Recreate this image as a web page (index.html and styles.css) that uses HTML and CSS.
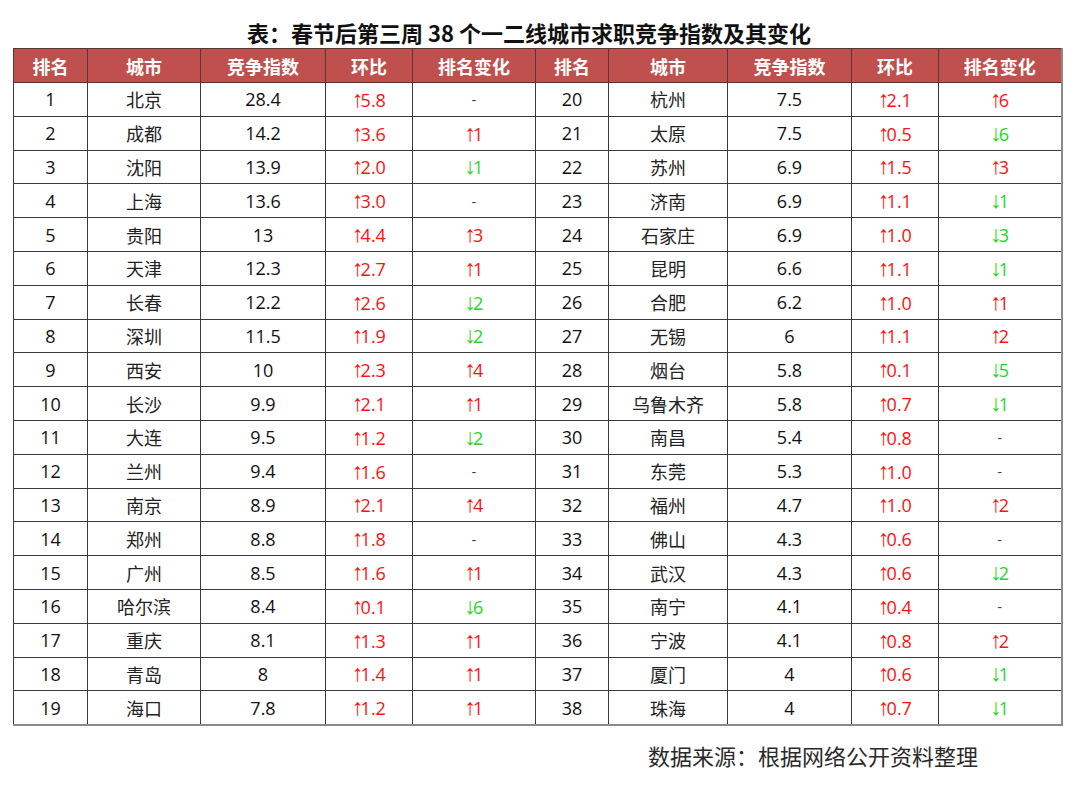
FILE: index.html
```html
<!DOCTYPE html>
<html lang="zh-CN">
<head>
<meta charset="utf-8">
<title>春节后第三周 38 个一二线城市求职竞争指数及其变化</title>
<link rel="stylesheet" href="styles.css">
</head>
<body>
<div class="page">
  <h1 class="title">表：春节后第三周 38 个一二线城市求职竞争指数及其变化</h1>
  <table class="grid">
    <colgroup>
      <col class="c1"><col class="c2"><col class="c3"><col class="c4"><col class="c5">
      <col class="c6"><col class="c7"><col class="c8"><col class="c9"><col class="c10">
    </colgroup>
    <thead>
      <tr><th>排名</th><th>城市</th><th>竞争指数</th><th>环比</th><th>排名变化</th><th>排名</th><th>城市</th><th>竞争指数</th><th>环比</th><th>排名变化</th></tr>
    </thead>
    <tbody>
      <tr><td>1</td><td class="cn">北京</td><td>28.4</td><td class="up"><span class="ar">↑</span>5.8</td><td class="na">-</td><td>20</td><td class="cn">杭州</td><td>7.5</td><td class="up"><span class="ar">↑</span>2.1</td><td class="up"><span class="ar">↑</span>6</td></tr>
      <tr><td>2</td><td class="cn">成都</td><td>14.2</td><td class="up"><span class="ar">↑</span>3.6</td><td class="up"><span class="ar">↑</span>1</td><td>21</td><td class="cn">太原</td><td>7.5</td><td class="up"><span class="ar">↑</span>0.5</td><td class="dn"><span class="ar">↓</span>6</td></tr>
      <tr><td>3</td><td class="cn">沈阳</td><td>13.9</td><td class="up"><span class="ar">↑</span>2.0</td><td class="dn"><span class="ar">↓</span>1</td><td>22</td><td class="cn">苏州</td><td>6.9</td><td class="up"><span class="ar">↑</span>1.5</td><td class="up"><span class="ar">↑</span>3</td></tr>
      <tr><td>4</td><td class="cn">上海</td><td>13.6</td><td class="up"><span class="ar">↑</span>3.0</td><td class="na">-</td><td>23</td><td class="cn">济南</td><td>6.9</td><td class="up"><span class="ar">↑</span>1.1</td><td class="dn"><span class="ar">↓</span>1</td></tr>
      <tr><td>5</td><td class="cn">贵阳</td><td>13</td><td class="up"><span class="ar">↑</span>4.4</td><td class="up"><span class="ar">↑</span>3</td><td>24</td><td class="cn">石家庄</td><td>6.9</td><td class="up"><span class="ar">↑</span>1.0</td><td class="dn"><span class="ar">↓</span>3</td></tr>
      <tr><td>6</td><td class="cn">天津</td><td>12.3</td><td class="up"><span class="ar">↑</span>2.7</td><td class="up"><span class="ar">↑</span>1</td><td>25</td><td class="cn">昆明</td><td>6.6</td><td class="up"><span class="ar">↑</span>1.1</td><td class="dn"><span class="ar">↓</span>1</td></tr>
      <tr><td>7</td><td class="cn">长春</td><td>12.2</td><td class="up"><span class="ar">↑</span>2.6</td><td class="dn"><span class="ar">↓</span>2</td><td>26</td><td class="cn">合肥</td><td>6.2</td><td class="up"><span class="ar">↑</span>1.0</td><td class="up"><span class="ar">↑</span>1</td></tr>
      <tr><td>8</td><td class="cn">深圳</td><td>11.5</td><td class="up"><span class="ar">↑</span>1.9</td><td class="dn"><span class="ar">↓</span>2</td><td>27</td><td class="cn">无锡</td><td>6</td><td class="up"><span class="ar">↑</span>1.1</td><td class="up"><span class="ar">↑</span>2</td></tr>
      <tr><td>9</td><td class="cn">西安</td><td>10</td><td class="up"><span class="ar">↑</span>2.3</td><td class="up"><span class="ar">↑</span>4</td><td>28</td><td class="cn">烟台</td><td>5.8</td><td class="up"><span class="ar">↑</span>0.1</td><td class="dn"><span class="ar">↓</span>5</td></tr>
      <tr><td>10</td><td class="cn">长沙</td><td>9.9</td><td class="up"><span class="ar">↑</span>2.1</td><td class="up"><span class="ar">↑</span>1</td><td>29</td><td class="cn">乌鲁木齐</td><td>5.8</td><td class="up"><span class="ar">↑</span>0.7</td><td class="dn"><span class="ar">↓</span>1</td></tr>
      <tr><td>11</td><td class="cn">大连</td><td>9.5</td><td class="up"><span class="ar">↑</span>1.2</td><td class="dn"><span class="ar">↓</span>2</td><td>30</td><td class="cn">南昌</td><td>5.4</td><td class="up"><span class="ar">↑</span>0.8</td><td class="na">-</td></tr>
      <tr><td>12</td><td class="cn">兰州</td><td>9.4</td><td class="up"><span class="ar">↑</span>1.6</td><td class="na">-</td><td>31</td><td class="cn">东莞</td><td>5.3</td><td class="up"><span class="ar">↑</span>1.0</td><td class="na">-</td></tr>
      <tr><td>13</td><td class="cn">南京</td><td>8.9</td><td class="up"><span class="ar">↑</span>2.1</td><td class="up"><span class="ar">↑</span>4</td><td>32</td><td class="cn">福州</td><td>4.7</td><td class="up"><span class="ar">↑</span>1.0</td><td class="up"><span class="ar">↑</span>2</td></tr>
      <tr><td>14</td><td class="cn">郑州</td><td>8.8</td><td class="up"><span class="ar">↑</span>1.8</td><td class="na">-</td><td>33</td><td class="cn">佛山</td><td>4.3</td><td class="up"><span class="ar">↑</span>0.6</td><td class="na">-</td></tr>
      <tr><td>15</td><td class="cn">广州</td><td>8.5</td><td class="up"><span class="ar">↑</span>1.6</td><td class="up"><span class="ar">↑</span>1</td><td>34</td><td class="cn">武汉</td><td>4.3</td><td class="up"><span class="ar">↑</span>0.6</td><td class="dn"><span class="ar">↓</span>2</td></tr>
      <tr><td>16</td><td class="cn">哈尔滨</td><td>8.4</td><td class="up"><span class="ar">↑</span>0.1</td><td class="dn"><span class="ar">↓</span>6</td><td>35</td><td class="cn">南宁</td><td>4.1</td><td class="up"><span class="ar">↑</span>0.4</td><td class="na">-</td></tr>
      <tr><td>17</td><td class="cn">重庆</td><td>8.1</td><td class="up"><span class="ar">↑</span>1.3</td><td class="up"><span class="ar">↑</span>1</td><td>36</td><td class="cn">宁波</td><td>4.1</td><td class="up"><span class="ar">↑</span>0.8</td><td class="up"><span class="ar">↑</span>2</td></tr>
      <tr><td>18</td><td class="cn">青岛</td><td>8</td><td class="up"><span class="ar">↑</span>1.4</td><td class="up"><span class="ar">↑</span>1</td><td>37</td><td class="cn">厦门</td><td>4</td><td class="up"><span class="ar">↑</span>0.6</td><td class="dn"><span class="ar">↓</span>1</td></tr>
      <tr><td>19</td><td class="cn">海口</td><td>7.8</td><td class="up"><span class="ar">↑</span>1.2</td><td class="up"><span class="ar">↑</span>1</td><td>38</td><td class="cn">珠海</td><td>4</td><td class="up"><span class="ar">↑</span>0.7</td><td class="dn"><span class="ar">↓</span>1</td></tr>
    </tbody>
  </table>
  <p class="source">数据来源：根据网络公开资料整理</p>
</div>
</body>
</html>
```

FILE: styles.css
```css
html, body {
  margin: 0;
  padding: 0;
  background: #ffffff;
}

.page {
  width: 1080px;
  height: 785px;
  padding-top: 20px;
  box-sizing: border-box;
  font-family: "Open Sans", "Noto Sans CJK SC", sans-serif;
  color: #111111;
  overflow: hidden;
}

.title {
  margin: 0 0 4px 0;
  padding-right: 22px;
  font-family: "Noto Sans CJK SC", sans-serif;
  font-size: 22px;
  font-weight: 700;
  line-height: 24px;
  text-align: center;
  color: #111111;
}

.grid {
  margin-left: 13px;
  width: 1048px;
  table-layout: fixed;
  border-collapse: collapse;
  border-right: 2px solid #8a8a8a;
  border-bottom: 2px solid #8a8a8a;
}

.c1 { width: 74px; }
.c2 { width: 113px; }
.c3 { width: 125px; }
.c4 { width: 87px; }
.c5 { width: 123px; }
.c6 { width: 73px; }
.c7 { width: 119px; }
.c8 { width: 124px; }
.c9 { width: 87px; }
.c10 { width: 123px; }

.grid th {
  height: 33px;
  padding: 0;
  background: #c0504d;
  color: #ffffff;
  font-family: "Noto Sans CJK SC", sans-serif;
  font-size: 18px;
  font-weight: 700;
  line-height: 20px;
  text-align: center;
  border: 1px solid #5b3433;
}

.grid td {
  height: 32.8px;
  padding: 0;
  font-size: 18px;
  line-height: 20px;
  text-align: center;
  border: 1px solid #3a3a3a;
  color: #111111;
}

.grid td.cn {
  font-family: "Noto Sans CJK SC", sans-serif;
  color: #222222;
}

.grid td.up {
  color: #ff1010;
}

.grid td.dn {
  color: #22d822;
}

.grid td.na {
  color: #444444;
  font-size: 15px;
}

.ar {
  font-family: "Liberation Sans", sans-serif;
  font-size: 23px;
  line-height: 20px;
  letter-spacing: -3px;
}

.source {
  margin: 17px 0 0 648px;
  font-family: "Noto Sans CJK SC", sans-serif;
  font-size: 22px;
  line-height: 24px;
  color: #2a2a2a;
}
```
